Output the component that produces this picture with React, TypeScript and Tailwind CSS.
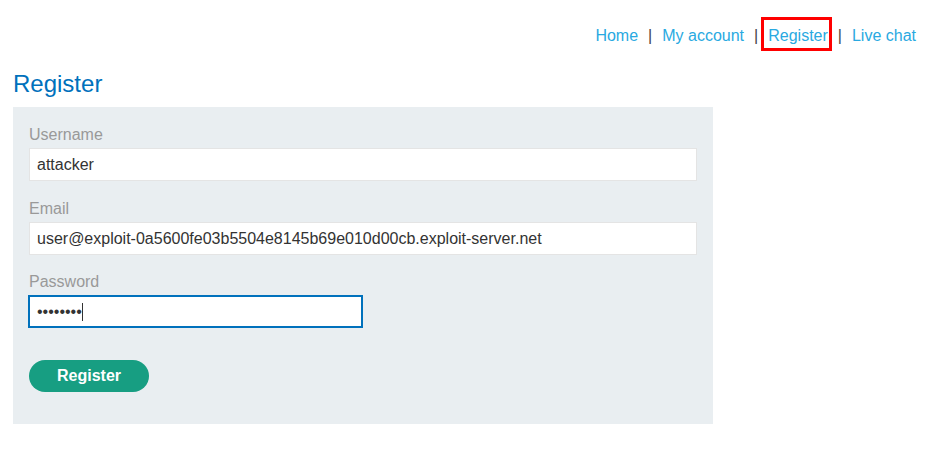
import React from 'react';

const links = ['Home', 'My account', 'Register', 'Live chat'];

const App: React.FC = () => {
  return (
    <div className="min-h-screen bg-white text-[#333] font-['Liberation_Sans',Arial,sans-serif]">
      {/* Top nav */}
      <header className="flex justify-end pt-[26px] pr-[15px] text-[16px] leading-[20px]">
        {links.map((name, i) => (
          <div key={name} className="flex items-center">
            {i > 0 && <span className="mx-[10px] text-[#444]">|</span>}
            <span className="relative">
              <a href="#" className="text-[#29a9e1]">
                {name}
              </a>
              {name === 'Register' && (
                <span className="absolute left-[-7px] right-[-4px] top-[-9px] bottom-[-5px] border-[3px] border-[#ff0000]" />
              )}
            </span>
          </div>
        ))}
      </header>

      <main className="px-[13px] pt-[24px]">
        <h1 className="text-[24px] leading-[28px] text-[#0071bc] mb-[9px]">Register</h1>

        {/* Form */}
        <div className="w-[700px] bg-[#e9eef1] px-[16px] pt-[18px] pb-[32px]">
          <label className="block text-[16px] leading-[20px] text-[#999] mb-[3px]">Username</label>
          <div className="h-[33px] w-full bg-white border border-[#e4e4e4] pl-[7px] flex items-center text-[16px] text-[#333]">
            attacker
          </div>

          <label className="block text-[16px] leading-[20px] text-[#999] mt-[18px] mb-[3px]">Email</label>
          <div className="h-[33px] w-full bg-white border border-[#e4e4e4] pl-[7px] flex items-center text-[16px] text-[#333]">
            user@exploit-0a5600fe03b5504e8145b69e010d00cb.exploit-server.net
          </div>

          <label className="block text-[16px] leading-[20px] text-[#999] mt-[17px] mb-[3px]">Password</label>
          <div className="h-[33px] w-[335px] -ml-[1px] bg-white border-2 border-[#0071bc] pl-[7px] flex items-center text-[16px] text-[#333]">
            <span>••••••••</span>
            <span className="w-[1px] h-[18px] bg-[#333]" />
          </div>

          <button className="mt-[32px] h-[32px] w-[120px] rounded-full bg-[#179e82] text-white font-bold text-[16px]">
            Register
          </button>
        </div>
      </main>
    </div>
  );
};

export default App;
